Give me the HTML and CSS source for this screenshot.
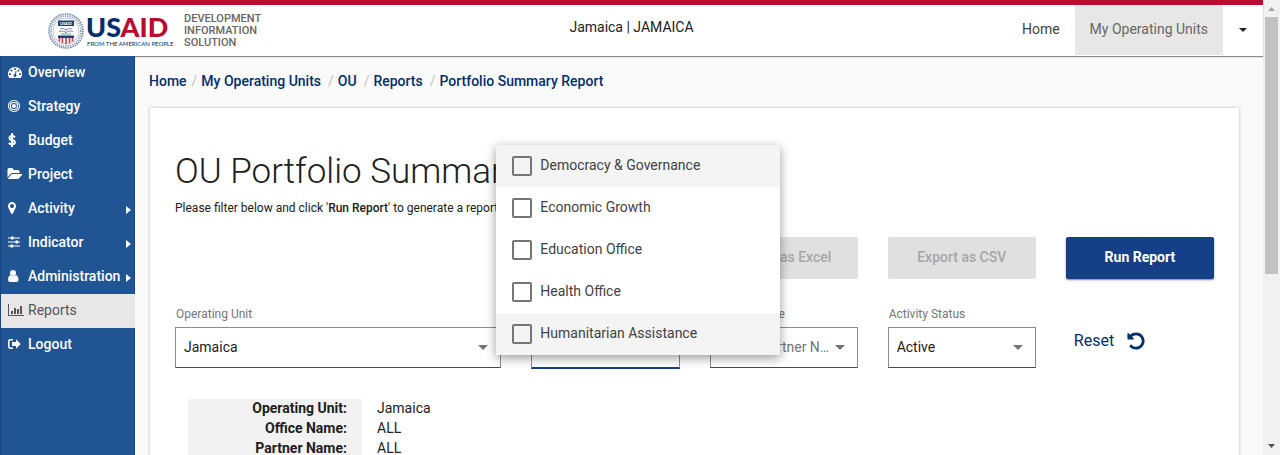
FILE: index.html
```html
<!DOCTYPE html>
<html lang="en">
<head>
<meta charset="utf-8">
<title>OU Portfolio Summary Report</title>
<link rel="stylesheet" href="styles.css">
</head>
<body>
<div class="page">
  <header class="topbar">
    <div class="brand">
      <svg class="seal" viewBox="0 0 36 36" aria-hidden="true">
        <circle cx="18" cy="18" r="17" fill="none" stroke="#7686a5" stroke-width="1.500" stroke-dasharray="1.600 .7"/>
        <circle cx="18" cy="18" r="15" fill="none" stroke="#93a0b8" stroke-width="1.800" stroke-dasharray="1.300 1"/>
        <circle cx="18" cy="18" r="13" fill="#fff" stroke="#93a0b8" stroke-width=".6"/>
        <path d="M10 7.500h16V13H10z" fill="#23406f"/>
        <text class="seal-text" x="18" y="12">USAID</text>
        <path d="M12 16q3-1.500 6 1 3-2.500 6-1M11 18.500q4-1.500 7 1 3-2.500 7-1M13 21h10" fill="none" stroke="#8190ab" stroke-width="1.100"/>
        <path d="M10 22.500h16v2.500H10z" fill="#23406f"/>
        <path d="M11.500 25v3.500M14.500 25v5M18 25v6M21.500 25v5M24.500 25v3.500" stroke="#c8415c" stroke-width="1.700"/>
      </svg>
      <div class="wordmark">
        <div class="wordmark-name">US<span>AID</span></div>
        <div class="wordmark-line">FROM THE AMERICAN PEOPLE</div>
      </div>
      <div class="product">DEVELOPMENT<br>INFORMATION<br>SOLUTION</div>
    </div>
    <div class="unit">Jamaica | JAMAICA</div>
    <nav class="topnav">
      <a href="#home">Home</a>
      <a href="#units" class="current">My Operating Units</a>
      <button type="button" aria-label="Account menu"><svg width="8" height="4" viewBox="0 0 8 4"><path d="M0 0h8L4 4z" fill="#222"/></svg></button>
    </nav>
  </header>
  <div class="body">
    <nav class="sidebar">
      <a href="#overview"><svg viewBox="0 0 1792 1792"><path d="M384 1152q0-53-37.500-90.500t-90.500-37.500-90.500 37.500-37.500 90.500 37.500 90.500 90.500 37.500 90.500-37.500 37.500-90.500zm192-448q0-53-37.500-90.500t-90.500-37.500-90.500 37.500-37.500 90.500 37.500 90.500 90.500 37.500 90.500-37.500 37.500-90.500zm428 481l101-382q6-26-7.500-48.500t-38.500-29.500-48 6.500-30 39.500l-101 382q-60 5-107 43.500t-63 98.500q-20 77 20 146t117 89 146-20 89-117q16-60-6-117t-72-91zm660-33q0-53-37.500-90.500t-90.500-37.500-90.500 37.500-37.500 90.500 37.500 90.500 90.500 37.500 90.500-37.500 37.500-90.500zm-640-640q0-53-37.500-90.500t-90.500-37.500-90.500 37.500-37.500 90.500 37.500 90.500 90.500 37.500 90.500-37.500 37.500-90.500zm448 192q0-53-37.500-90.500t-90.500-37.500-90.500 37.500-37.500 90.500 37.500 90.500 90.500 37.500 90.500-37.500 37.500-90.500zm320 448q0 261-141 483-19 29-54 29h-1402q-35 0-54-29-141-221-141-483 0-182 71-348t191-286 286-191 348-71 348 71 286 191 191 286 71 348z"/></svg>Overview</a>
      <a href="#strategy"><svg viewBox="0 0 14 14"><g fill="none" stroke="currentColor"><circle cx="6" cy="7" r="5.500" stroke-width="1.200"/><circle cx="6" cy="7" r="3.500" stroke-width="1.200"/></g><circle cx="6" cy="7" r="2"/></svg>Strategy</a>
      <a href="#budget"><svg viewBox="0 0 14 14"><path d="M7 4.200Q5.800 3 4 3 1.500 3 1.500 4.900 1.500 6.500 4 7q2.900.6 2.900 2.300Q6.900 11.200 4 11.200 2.200 11.200.8 9.900M4.100 0v14" fill="none" stroke="currentColor" stroke-width="2"/></svg>Budget</a>
      <a href="#project"><svg viewBox="0 0 1792 1792"><path d="M1815 952q0 31-31 66l-336 396q-43 51-120.500 86.500t-143.500 35.500h-1088q-34 0-60.500-13t-26.500-43q0-31 31-66l336-396q43-51 120.500-86.500t143.500-35.500h1088q34 0 60.500 13t26.500 43zm-343-344v160h-832q-94 0-197 47.500t-164 119.500l-337 396-5 6q0-4-.5-12.500t-.5-12.500v-960q0-92 66-158t158-66h320q92 0 158 66t66 158v32h544q92 0 158 66t66 158z"/></svg>Project</a>
      <a href="#activity"><svg viewBox="384 0 1792 1792"><path d="M1152 640q0-106-75-181t-181-75-181 75-75 181 75 181 181 75 181-75 75-181zm256 0q0 109-33 179l-364 774q-16 33-47.500 52t-67.500 19-67.500-19-46.500-52l-365-774q-33-70-33-179 0-212 150-362t362-150 362 150 150 362z"/></svg>Activity<i class="caret"></i></a>
      <a href="#indicator"><svg viewBox="0 0 14 14"><path d="M0 2.400h12v1.200H0zM0 6.400h12v1.200H0zM0 10.400h12v1.200H0z"/><path d="M3 1.500h2.500v3H3zM7.500 5.500H10v3H7.500zM2.500 9.500H5v3H2.500z"/></svg>Indicator<i class="caret"></i></a>
      <a href="#administration"><svg viewBox="0 0 14 14"><circle cx="5" cy="4" r="3"/><path d="M2.300 6Q0 7 0 10.500 0 13 2 13h6.500q2 0 2-2.500Q10.500 7 8 6 5 8.500 2.300 6z"/></svg>Administration<i class="caret"></i></a>
      <a href="#reports" class="current"><svg viewBox="0 0 14 14"><path d="M0 1h1v11h15v1H0zM3 8h2v3H3zM6 5h2v6H6zM9 6h2v5H9zM12 3h2v8h-2z"/></svg>Reports</a>
      <a href="#logout"><svg viewBox="0 0 14 14"><path d="M5 2.700H2.500Q.8 2.700.8 4.200v5.600q0 1.500 1.700 1.500H5" fill="none" stroke="currentColor" stroke-width="1.500"/><path d="M4 5h4V2.200L12.700 7 8 11.800V9H4z"/></svg>Logout</a>
    </nav>
    <main class="content">
      <nav class="crumbs">
        <a href="#home">Home</a><span>/</span><a href="#units">My Operating Units</a><span class="wide">/</span><a href="#ou">OU</a><span class="wide">/</span><a href="#reports">Reports</a><span class="wide">/</span><a href="#summary">Portfolio Summary Report</a>
      </nav>
      <section class="card">
        <h1>OU Portfolio Summary Report</h1>
        <p class="hint">Please filter below and click '<b>Run Report</b>' to generate a report.</p>
        <div class="actions">
          <button type="button" class="excel" disabled>Export as Excel</button>
          <button type="button" disabled>Export as CSV</button>
          <button type="button" class="primary">Run Report</button>
        </div>
        <div class="filters">
          <div class="field unit-field">
            <label for="ou">Operating Unit</label>
            <div class="box"><select id="ou"><option>Jamaica</option></select></div>
          </div>
          <div class="field open">
            <label for="office">Office Name</label>
            <div class="box"><select id="office"><option>Select Office</option></select></div>
            <div class="menu">
              <label class="shade"><input type="checkbox">Democracy &amp; Governance</label>
              <label><input type="checkbox">Economic Growth</label>
              <label><input type="checkbox">Education Office</label>
              <label><input type="checkbox">Health Office</label>
              <label class="shade"><input type="checkbox">Humanitarian Assistance</label>
            </div>
          </div>
          <div class="field">
            <label for="partner">Partner Name</label>
            <div class="box muted"><select id="partner"><option>Select Partner Name</option></select></div>
          </div>
          <div class="field">
            <label for="status">Activity Status</label>
            <div class="box"><select id="status"><option>Active</option></select></div>
          </div>
          <button type="button" class="reset">Reset <svg viewBox="0 0 1792 1792"><path d="M1664 896q0 156-61 298t-164 245-245 164-298 61q-172 0-327-72.500t-264-204.500q-7-10-6.500-22.500t8.500-20.500l137-138q10-9 25-9 16 2 23 12 73 95 179 147t225 52q104 0 198.500-40.500t163.500-109.500 109.500-163.500 40.500-198.500-40.500-198.500-109.500-163.500-163.500-109.500-198.500-40.500q-98 0-188 35.500t-160 101.500l137 138q31 30 14 69-17 40-59 40h-448q-26 0-45-19t-19-45v-448q0-42 40-59 39-17 69 14l130 129q107-101 244.500-156.500t284.500-55.500q156 0 298 61t245 164 164 245 61 298z"/></svg></button>
        </div>
        <table class="summary">
          <tr><th scope="row">Operating Unit:</th><td>Jamaica</td></tr>
          <tr><th scope="row">Office Name:</th><td>ALL</td></tr>
          <tr><th scope="row">Partner Name:</th><td>ALL</td></tr>
        </table>
      </section>
    </main>
  </div>
</div>
<div class="scrollbar" aria-hidden="true">
  <svg viewBox="0 0 17 17"><path d="M5 11h7L8.500 7z" fill="#a3a3a3"/></svg>
  <div class="track"><div class="thumb"></div></div>
  <svg viewBox="0 0 17 17"><path d="M5 6h7l-3.500 4z" fill="#505050"/></svg>
</div>
</body>
</html>
```
FILE: styles.css
```css
* { box-sizing: border-box; }
body {
  margin: 0;
  display: flex;
  height: 100vh;
  overflow: hidden;
  background: #fafafa;
  color: #212121;
  font: 14px/20px Roboto, "Liberation Sans", sans-serif;
}
a { color: inherit; text-decoration: none; }
button { font: inherit; border: 0; background: none; padding: 0; cursor: pointer; }
.page { flex: 1; min-width: 0; display: flex; flex-direction: column; }

.topbar {
  display: grid;
  grid-template-columns: 1fr auto 1fr;
  flex: none;
  min-height: 56px;
  border-top: 5px solid #ba0c2f;
  background: #fff;
  box-shadow: 0 1px 1px #8a8a8a;
  z-index: 1;
}
.brand { display: flex; padding: 8px 0 0 48px; }
.seal { width: 36px; height: 36px; }
.seal-text { font: bold 4px Lato, sans-serif; fill: #fff; text-anchor: middle; }
.wordmark { padding: 1px 0 0 2px; width: 100px; white-space: nowrap; }
.wordmark-name { font: 900 27px/26px Lato, sans-serif; color: #002f6c; }
.wordmark-name span { color: #ba0c2f; }
.wordmark-line { padding-left: 1px; font: 400 6px/8px Lato, sans-serif; color: #002f6c; }
.product { font-size: 11px; line-height: 12px; color: #6c6463; font-weight: 500; }
.unit { padding-top: 12px; color: #212121; }
.topnav { display: flex; justify-content: flex-end; line-height: 48px; color: #424242; }
.topnav a { padding: 0 15px; height: 50px; }
.topnav .current { background: #e7e7e7; color: #6c6463; }
.topnav button { display: flex; align-items: center; justify-content: center; width: 40px; height: 50px; }

.body { display: flex; flex: 1; min-height: 0; }
.sidebar {
  flex: none;
  width: 135px;
  background: #205493;
  border: solid #1a4480;
  border-width: 0 1px;
  color: #fff;
  font-weight: 500;
  z-index: 2;
}
.sidebar a { display: flex; align-items: center; height: 34px; padding: 0 3px 2px 7px; }
.sidebar svg { width: 14px; height: 14px; margin-right: 6px; fill: currentColor; overflow: visible; }
.sidebar .current { background: #e7e7e7; color: #5a5353; font-weight: 400; margin-right: -1px; }
.caret { margin: 4px 0 0 auto; border: solid transparent; border-width: 4px 0 4px 5px; border-left-color: #fff; }

.content { flex: 1; min-width: 0; padding: 15px 24px 0 15px; }
.crumbs { display: flex; color: #002f6c; font-weight: 500; margin: 0 0 17px -1px; }
.crumbs span { color: #c4c4c4; font-weight: 400; padding: 0 4px 0 5px; }
.crumbs .wide { padding-left: 7px; }
.card {
  background: #fff;
  padding: 40px 25px 60px;
  box-shadow: 0 0 3px rgba(0, 0, 0, .28);
}
h1 { margin: 0; font-size: 35px; line-height: 48px; font-weight: 300; }
.hint { margin: 2px 0 19px; font-size: 12px; }
.hint b { font-weight: 500; }
.actions, .filters { display: grid; grid-template-columns: repeat(6, minmax(0, 1fr)); column-gap: 30px; }
.actions button { height: 42px; padding-bottom: 2px; border-radius: 2px; background: #e0e0e0; color: #a6a6a6; font-weight: 500; }
.actions .excel { grid-column: 4; }
.actions .primary { background: #154087; color: #fff; font-weight: 700; box-shadow: 0 1px 2px rgba(0, 0, 0, .5); }

.filters { margin-top: 25px; }
.unit-field { grid-column: span 2; }
.field { position: relative; }
.field > label { display: block; padding-left: 1px; height: 23px; font-size: 12px; color: #757575; }
.box { position: relative; border: 1px solid #8c8c8c; border-bottom-color: #4a4a4a; height: 41px; }
.box::after {
  content: "";
  position: absolute;
  right: 12px;
  top: 17px;
  border: solid transparent;
  border-width: 5px 5px 0;
  border-top-color: #757575;
}
.box select {
  appearance: none;
  width: 100%;
  height: 100%;
  border: 0;
  padding: 0 27px 2px 8px;
  background: none;
  font: inherit;
  color: #212121;
  text-overflow: ellipsis;
}
.box.muted select { color: #757575; }
.open .box { border-bottom: 2px solid #154087; height: 42px; }
.menu {
  position: absolute;
  left: -35px;
  top: -159px;
  width: 284px;
  background: #fff;
  box-shadow: 0 3px 10px rgba(0, 0, 0, .4);
  z-index: 3;
}
.menu label { display: flex; align-items: center; gap: 8px; height: 42px; padding: 0 16px 2px; color: #424242; }
.menu .shade { background: #f4f4f4; }
.menu input { appearance: none; width: 20px; height: 20px; margin: 2px 0 0; border: 2px solid #757575; border-radius: 2px; }
.reset { display: flex; align-items: center; gap: 12px; padding: 8px 0 0 8px; font-size: 16px; color: #002f6c; }
.reset svg { width: 20px; height: 20px; fill: currentColor; }

.summary { border-collapse: collapse; margin: 30px 0 0 13px; line-height: 18px; }
.summary th { width: 174px; padding: 0 15px 2px 0; background: #f2f2f2; text-align: right; font-weight: 700; }
.summary td { padding: 0 0 2px 15px; }

.scrollbar { flex: none; width: 17px; display: flex; flex-direction: column; background: #f1f1f1; }
.scrollbar svg { flex: none; width: 17px; height: 17px; }
.track { flex: 1; padding: 0 2px; }
.thumb { height: 61%; background: #c1c1c1; }
```
